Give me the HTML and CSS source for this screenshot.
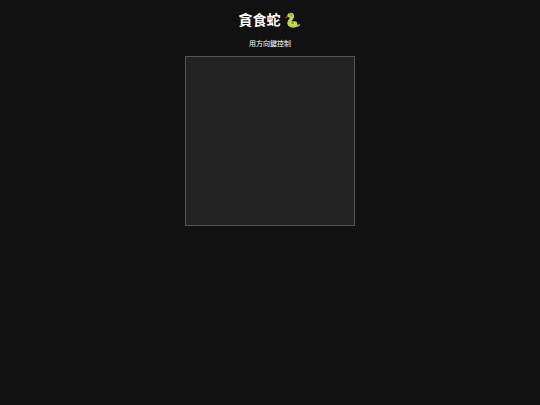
FILE: index.html
```html
<!DOCTYPE html>
<html lang="zh-Hant">
<head>
  <meta charset="UTF-8">
  <meta name="viewport" content="width=device-width, initial-scale=1">
  <title>貪食蛇</title>
  <link rel="stylesheet" href="styles.css">
</head>
<body>
  <h1>貪食蛇 🐍</h1>
  <p>用方向鍵控制</p>
  <canvas id="game" width="400" height="400"></canvas>
</body>
</html>
```

FILE: styles.css
```css
body {
  margin: 0;
  background: #111;
  color: white;
  font-family: "Liberation Sans", "Noto Sans CJK JP", sans-serif;
  text-align: center;
}
h1 {
  margin: 10px 0 9px;
  font-size: 14px;
  line-height: 20px;
}
p {
  margin: 9px 0 7px;
  font-size: 7px;
  line-height: 10px;
}
canvas {
  display: block;
  width: 168px;
  height: 168px;
  margin: 0 auto;
  background: #222;
  border: 1px solid #555;
}
```
